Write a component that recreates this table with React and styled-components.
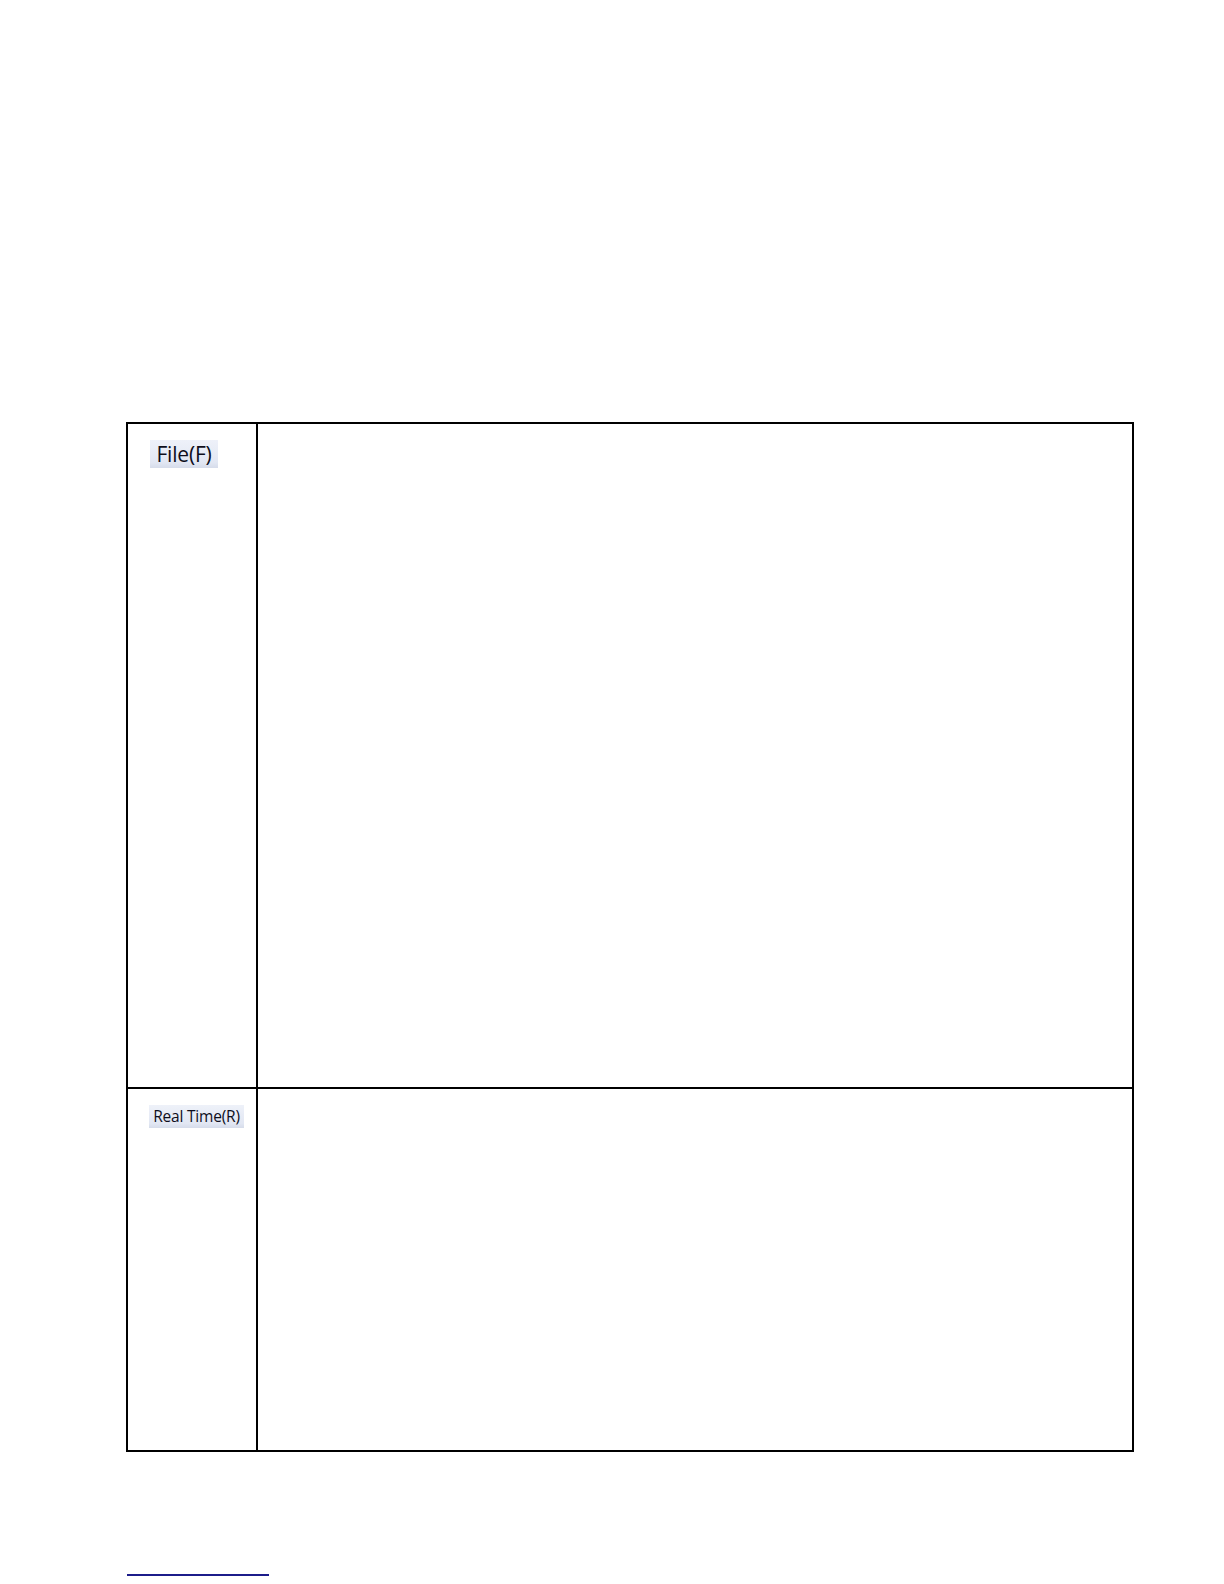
import React from "react";
import styled, { createGlobalStyle } from "styled-components";

const Global = createGlobalStyle`
  html, body { margin: 0; padding: 0; background: #ffffff; }
  body { font-family: "Open Sans", "Liberation Sans", sans-serif; }
`;

const Page = styled.div`
  width: 1224px;
  min-height: 1584px;
  box-sizing: border-box;
  padding: 422px 0 0 126px;
  background: #ffffff;
`;

const Table = styled.div`
  width: 1008px;
  box-sizing: border-box;
  border: 2px solid #000;
  display: grid;
  grid-template-columns: 130px 1fr;
  grid-template-rows: 663px 363px;
`;

const LabelCell = styled.div`
  box-sizing: border-box;
  border-right: 2px solid #000;
  border-top: ${(p) => (p.$first ? "none" : "2px solid #000")};
  padding: ${(p) => (p.$first ? "16px 0 0 22px" : "16px 0 0 21px")};
`;

const BodyCell = styled.div`
  box-sizing: border-box;
  border-top: ${(p) => (p.$first ? "none" : "2px solid #000")};
`;

const MenuButton = styled.div`
  display: inline-flex;
  align-items: center;
  justify-content: center;
  box-sizing: border-box;
  width: ${(p) => p.$w}px;
  height: ${(p) => p.$h}px;
  font-size: ${(p) => p.$size}px;
  font-weight: 500;
  color: #0e0e1c;
  letter-spacing: -0.2px;
  background: linear-gradient(#eef1f9, #e2e7f3 80%, #d6dcea);
  white-space: nowrap;
  line-height: 1;
`;

const Footnote = styled.div`
  width: 142px;
  height: 2px;
  margin: 122px 0 0 1px;
  background: #1c1c8a;
`;

export default function App() {
  return (
    <>
      <Global />
      <Page>
        <Table>
          <LabelCell $first>
            <MenuButton $w={68} $h={28} $size={21}>File(F)</MenuButton>
          </LabelCell>
          <BodyCell $first />
          <LabelCell>
            <MenuButton $w={95} $h={23} $size={15.5}>Real Time(R)</MenuButton>
          </LabelCell>
          <BodyCell />
        </Table>
        <Footnote />
      </Page>
    </>
  );
}
